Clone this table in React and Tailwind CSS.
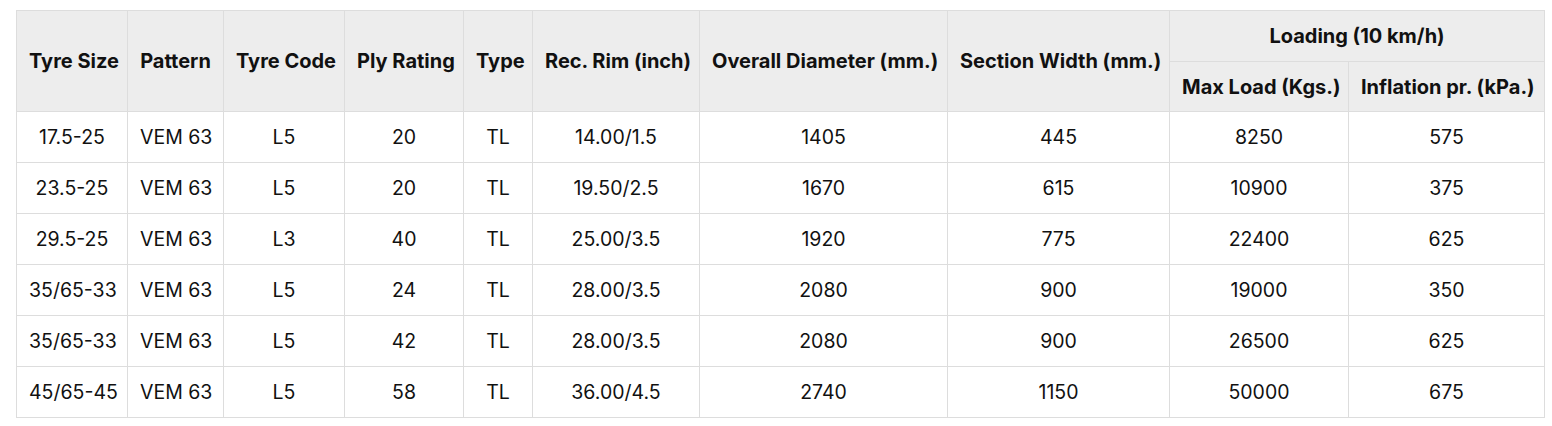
const rows = [
  ['17.5-25', 'VEM 63', 'L5', '20', 'TL', '14.00/1.5', '1405', '445', '8250', '575'],
  ['23.5-25', 'VEM 63', 'L5', '20', 'TL', '19.50/2.5', '1670', '615', '10900', '375'],
  ['29.5-25', 'VEM 63', 'L3', '40', 'TL', '25.00/3.5', '1920', '775', '22400', '625'],
  ['35/65-33', 'VEM 63', 'L5', '24', 'TL', '28.00/3.5', '2080', '900', '19000', '350'],
  ['35/65-33', 'VEM 63', 'L5', '42', 'TL', '28.00/3.5', '2080', '900', '26500', '625'],
  ['45/65-45', 'VEM 63', 'L5', '58', 'TL', '36.00/4.5', '2740', '1150', '50000', '675'],
]

export default function App() {
  const th = 'border border-[#dddddd] px-3 pt-3 pb-3 font-bold text-[20px] text-center whitespace-nowrap'
  const td = 'border border-[#dddddd] px-3 py-3 text-[19.5px] text-center whitespace-nowrap'

  return (
    <div className="min-h-screen bg-white px-4 pt-[10px] text-[#111] font-['Inter',sans-serif] leading-[26px]">
      <table className="w-[1528px] table-fixed border-collapse">
        <colgroup>
          <col className="w-[111px]" />
          <col className="w-[96px]" />
          <col className="w-[121px]" />
          <col className="w-[119px]" />
          <col className="w-[69px]" />
          <col className="w-[167px]" />
          <col className="w-[248px]" />
          <col className="w-[222px]" />
          <col className="w-[179px]" />
          <col className="w-[196px]" />
        </colgroup>
        <thead className="bg-[#ededed]">
          <tr>
            <th rowSpan={2} className={th}>Tyre Size</th>
            <th rowSpan={2} className={th}>Pattern</th>
            <th rowSpan={2} className={th}>Tyre Code</th>
            <th rowSpan={2} className={th}>Ply Rating</th>
            <th rowSpan={2} className={th}>Type</th>
            <th rowSpan={2} className={th}>Rec. Rim (inch)</th>
            <th rowSpan={2} className={th}>Overall Diameter (mm.)</th>
            <th rowSpan={2} className={th}>Section Width (mm.)</th>
            <th colSpan={2} className={th}>Loading (10 km/h)</th>
          </tr>
          <tr>
            <th className="border border-[#dddddd] px-3 pt-3 pb-[11px] font-bold text-[20px] text-center whitespace-nowrap">Max Load (Kgs.)</th>
            <th className="border border-[#dddddd] px-3 pt-3 pb-[11px] font-bold text-[20px] text-center whitespace-nowrap">Inflation pr. (kPa.)</th>
          </tr>
        </thead>
        <tbody>
          {rows.map((r, i) => (
            <tr key={i}>
              {r.map((c, j) => (
                <td key={j} className={td}>{c}</td>
              ))}
            </tr>
          ))}
        </tbody>
      </table>
    </div>
  )
}
